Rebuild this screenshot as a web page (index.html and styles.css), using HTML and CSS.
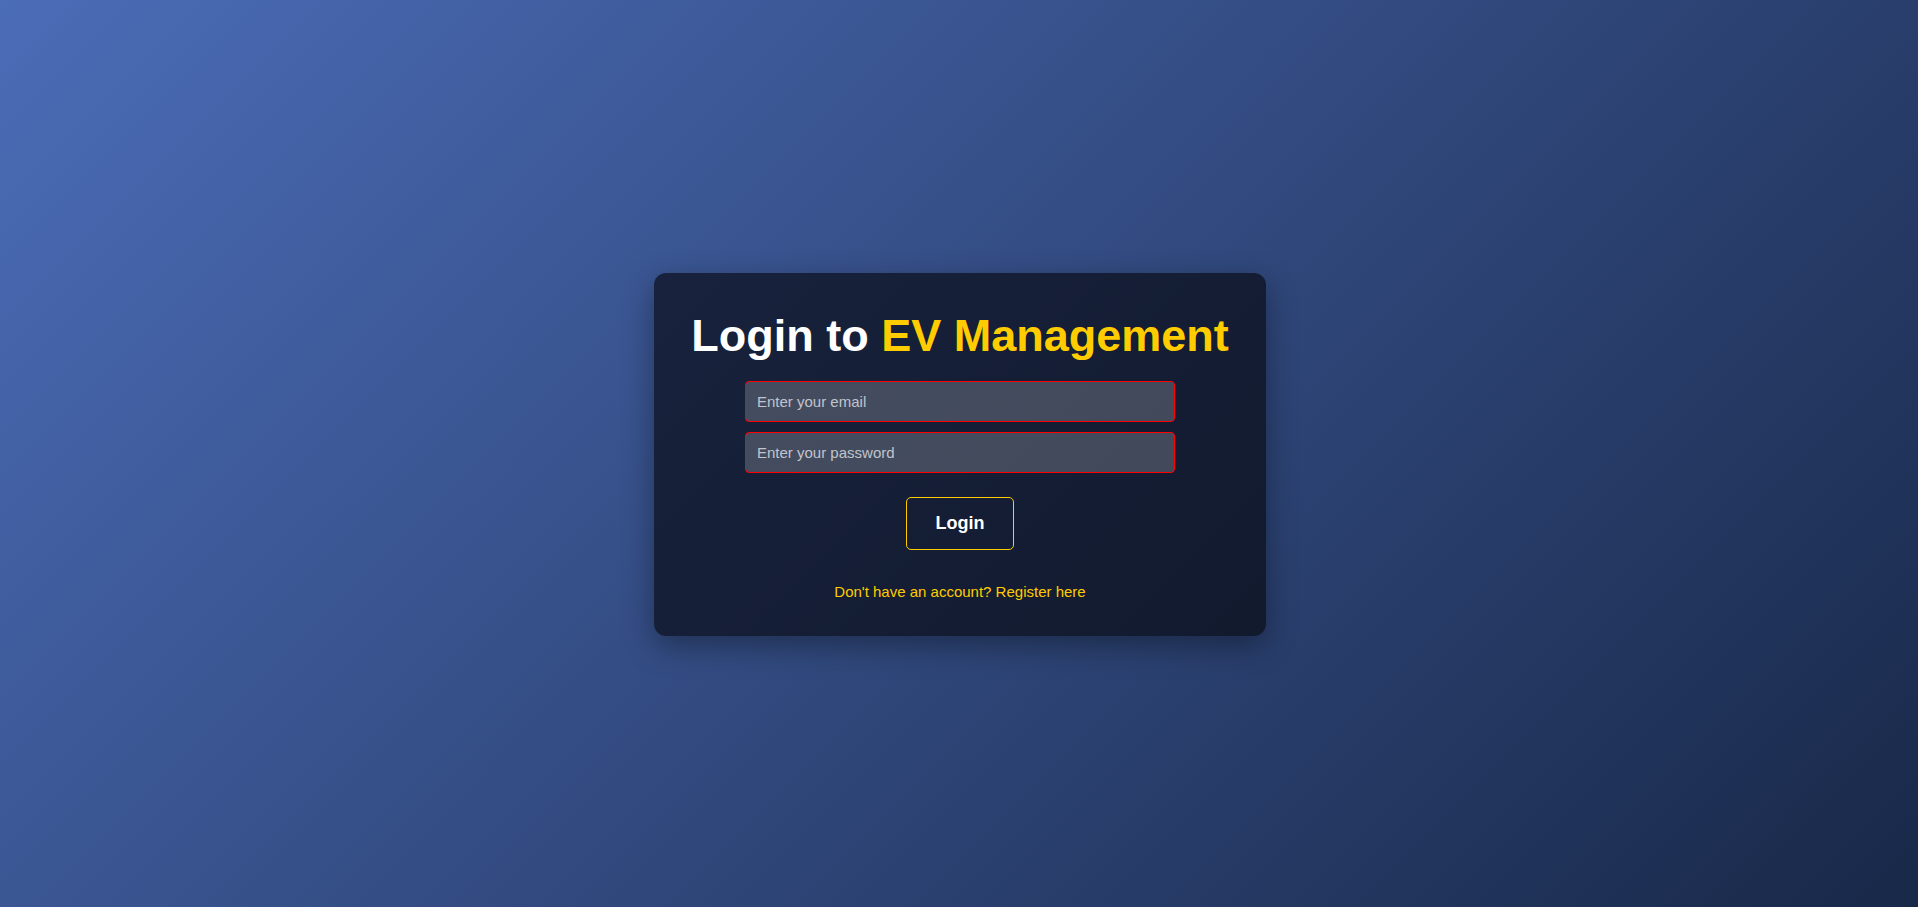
FILE: index.html
```html
<!DOCTYPE html>
<html lang="en">
<head>
<meta charset="utf-8">
<title>Login - EV Management</title>
<link rel="stylesheet" href="styles.css">
</head>
<body>
<main class="page">
  <form class="card">
    <h1 class="title">Login to <span class="accent">EV Management</span></h1>
    <input class="field" type="email" placeholder="Enter your email">
    <input class="field field-last" type="password" placeholder="Enter your password">
    <button class="btn" type="button">Login</button>
    <p class="register"><a href="#">Don't have an account? Register here</a></p>
  </form>
</main>
</body>
</html>
```
FILE: styles.css
```css
* { box-sizing: border-box; }
html, body { margin: 0; height: 100%; }
body {
  font-family: "Liberation Sans", Arial, sans-serif;
  background: linear-gradient(135deg, #4b6cb7 0%, #182848 100%);
  min-height: 100vh;
}
.page {
  min-height: 100vh;
  display: flex;
  align-items: center;
  justify-content: center;
}
.card {
  width: 612px;
  background: linear-gradient(135deg, rgba(22, 31, 56, 0.95), rgba(16, 24, 42, 0.95));
  border-radius: 12px;
  box-shadow: 0 10px 30px rgba(0, 0, 0, 0.35);
  padding: 37px 30px 36px;
  display: flex;
  flex-direction: column;
  align-items: center;
  margin: 1px 0 0 2px;
}
.title {
  margin: 0 0 19px;
  font-size: 45px;
  line-height: 52px;
  font-weight: bold;
  color: #ffffff;
  white-space: nowrap;
}
.accent { color: #ffcc00; }
.field {
  width: 430px;
  height: 41px;
  margin: 0 0 10px;
  padding: 0 11px;
  font-family: "Liberation Sans", Arial, sans-serif;
  font-size: 15px;
  color: #ffffff;
  background: rgba(255, 255, 255, 0.2);
  border: 1px solid #ff0000;
  border-radius: 4px;
  outline: none;
}
.field::placeholder { color: #c0c4cc; }
.field-last { margin-bottom: 24px; }
.btn {
  width: 108px;
  height: 53px;
  padding: 0;
  font-family: "Liberation Sans", Arial, sans-serif;
  font-size: 18px;
  font-weight: bold;
  color: #ffffff;
  background: transparent;
  border: 1px solid #ffcc00;
  border-radius: 5px;
  margin-bottom: 33px;
  cursor: pointer;
}
.register {
  margin: 0;
  font-size: 15px;
  line-height: 17px;
}
.register a {
  color: #ffcc00;
  text-decoration: none;
}
```
